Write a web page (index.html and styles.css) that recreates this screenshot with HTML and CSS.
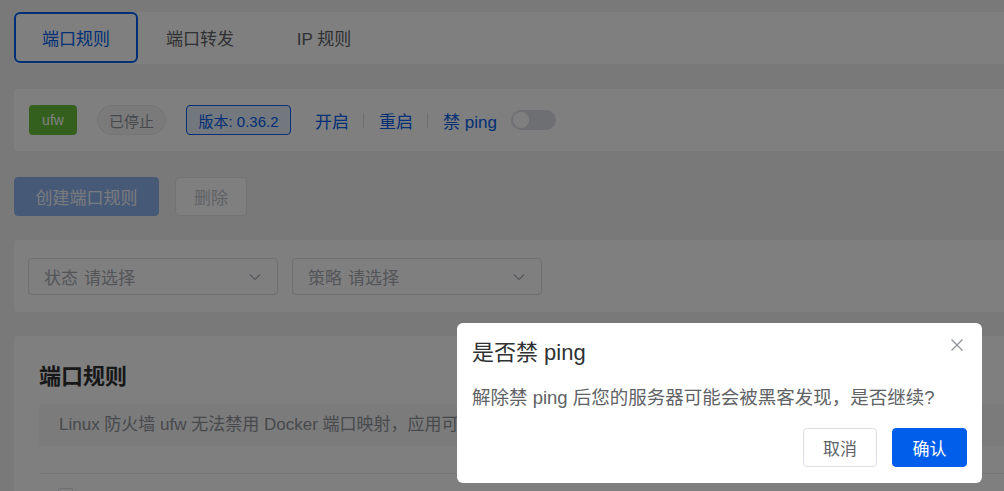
FILE: index.html
```html
<!DOCTYPE html>
<html>
    <head>
        <meta charset="utf-8">
        <link rel="stylesheet" href="styles.css">
    </head>
    <body>
        <div class="page">
            <div class="card tabs">
                <div class="tab active">端口规则</div>
                <div class="tab">端口转发</div>
                <div class="tab">IP 规则</div>
            </div>

            <div class="card status-bar">
                <span class="tag tag-green">ufw</span>
                <span class="tag tag-pill">已停止</span>
                <span class="tag tag-blue">版本: 0.36.2</span>
                <span class="link">开启</span>
                <span class="sep"></span>
                <span class="link">重启</span>
                <span class="sep"></span>
                <span class="link">禁 ping</span>
                <span class="switch"><span class="knob"></span></span>
            </div>

            <div class="toolbar">
                <button class="btn btn-primary-disabled">创建端口规则</button>
                <button class="btn btn-disabled">删除</button>
            </div>

            <div class="card filters">
                <div class="select">
                    <span class="select-label">状态</span>
                    <span class="select-placeholder">请选择</span>
                    <svg class="chevron" width="14" height="14" viewBox="0 0 14 14">
                        <path d="M2 4.5 L7 9.5 L12 4.5" fill="none" stroke="#a8abb2" stroke-width="1.2"/>
                    </svg>
                </div>
                <div class="select">
                    <span class="select-label">策略</span>
                    <span class="select-placeholder">请选择</span>
                    <svg class="chevron" width="14" height="14" viewBox="0 0 14 14">
                        <path d="M2 4.5 L7 9.5 L12 4.5" fill="none" stroke="#a8abb2" stroke-width="1.2"/>
                    </svg>
                </div>
            </div>

            <div class="card rules">
                <h2>端口规则</h2>
                <div class="alert">Linux 防火墙 ufw 无法禁用 Docker 端口映射，应用可以通过 iptables 规则进行端口访问限制。</div>
                <div class="table-head">
                    <span class="col col-check"><span class="checkbox"></span></span>
                    <span class="col col-status">状态</span>
                    <span class="col col-proto">协议</span>
                    <span class="col col-port">端口</span>
                    <span class="col col-strategy">策略</span>
                    <span class="col col-desc">来源</span>
                </div>
            </div>
        </div>

        <div class="mask">
            <div class="dialog">
                <div class="dialog-header">
                    <span class="dialog-title">是否禁 ping</span>
                    <svg class="close" width="14" height="14" viewBox="0 0 14 14">
                        <path d="M1.5 1.5 L12.5 12.5 M12.5 1.5 L1.5 12.5" stroke="#909399" stroke-width="1.3"/>
                    </svg>
                </div>
                <div class="dialog-body">解除禁 ping 后您的服务器可能会被黑客发现，是否继续?</div>
                <div class="dialog-footer">
                    <button class="btn btn-plain">取消</button>
                    <button class="btn btn-primary">确认</button>
                </div>
            </div>
        </div>
    </body>
</html>
```

FILE: styles.css
```css
* {
    box-sizing: border-box;
}

body {
    margin: 0;
    background-color: #f2f2f3;
    font-family: "Liberation Sans", "Noto Sans CJK SC", sans-serif;
    color: #303133;
    overflow: hidden;
}

.page {
    padding: 12px 0 0 14px;
    width: 1100px;
}

.card {
    background-color: white;
    border-radius: 4px;
}

/* tabs */
.tabs {
    display: flex;
    height: 52px;
}

.tab {
    width: 124px;
    height: 51px;
    display: flex;
    align-items: center;
    justify-content: center;
    font-size: 17px;
    color: #606266;
}

.tab.active {
    border: 2px solid #005eeb;
    border-radius: 6px;
    color: #005eeb;
}

/* status */
.status-bar {
    margin-top: 25px;
    height: 62px;
    display: flex;
    align-items: center;
    padding-left: 15px;
}

.tag {
    height: 30px;
    display: inline-flex;
    align-items: center;
    justify-content: center;
    border-radius: 4px;
    font-size: 15px;
}

.tag-green {
    width: 48px;
    background-color: #67c23a;
    color: white;
    font-size: 14px;
}

.tag-pill {
    width: 69px;
    margin-left: 20px;
    border: 1px solid #e9e9eb;
    background-color: #f4f4f5;
    color: #909399;
    border-radius: 15px;
}

.tag-blue {
    width: 105px;
    margin-left: 20px;
    border: 1px solid #005eeb;
    background-color: #e6effd;
    color: #005eeb;
}

.link {
    color: #005eeb;
    font-size: 17px;
}

.tag-blue + .link {
    margin-left: 24px;
}

.sep {
    width: 1px;
    height: 15px;
    background-color: #dcdfe6;
    margin: 0 15px 0 14px;
}

.switch {
    margin-left: 14px;
    width: 45px;
    height: 20px;
    border-radius: 10px;
    background-color: #dcdfe6;
    position: relative;
}

.knob {
    position: absolute;
    top: 2px;
    left: 2px;
    width: 16px;
    height: 16px;
    border-radius: 50%;
    background-color: white;
}

/* toolbar */
.toolbar {
    margin-top: 26px;
    display: flex;
    gap: 16px;
}

.btn {
    height: 39px;
    padding: 0;
    border-radius: 4px;
    font-family: inherit;
    font-size: 17px;
    border: 1px solid transparent;
    white-space: nowrap;
}

.btn-primary-disabled {
    width: 145px;
    background-color: #8cb3ee;
    border-color: #8cb3ee;
    color: #f4f7fc;
}

.btn-disabled {
    width: 72px;
    background-color: white;
    border-color: #e4e7ed;
    color: #c0c4cc;
}

/* filters */
.filters {
    margin-top: 24px;
    height: 72px;
    padding: 18px 14px;
    display: flex;
    gap: 14px;
}

.select {
    width: 250px;
    height: 37px;
    border: 1px solid #dcdfe6;
    border-radius: 4px;
    display: flex;
    align-items: center;
    padding: 0 15px;
    font-size: 17px;
    color: #a8abb2;
}

.select-placeholder {
    margin-left: 6px;
    flex: 1;
}

/* rules */
.rules {
    margin-top: 24px;
    padding: 26px 25px 0;
    height: 200px;
}

.rules h2 {
    margin: 0;
    font-size: 22px;
    line-height: 30px;
    font-weight: bold;
}

.alert {
    margin-top: 12px;
    height: 42px;
    line-height: 42px;
    padding: 0 20px;
    background-color: #f6f6f7;
    border-radius: 4px;
    color: #909399;
    font-size: 17px;
    white-space: nowrap;
    overflow: hidden;
}

.table-head {
    margin-top: 27px;
    border-top: 1px solid #ebeef5;
    display: flex;
    padding-top: 14px;
    font-size: 17px;
    font-weight: bold;
    color: #909399;
}

.col {
    display: inline-block;
}

.col-check {
    width: 76px;
    padding-left: 19px;
}

.checkbox {
    display: inline-block;
    width: 15px;
    height: 15px;
    border: 1px solid #dcdfe6;
    border-radius: 2px;
}

.col-status { width: 160px; }
.col-proto { width: 160px; }
.col-port { width: 263px; }
.col-strategy { width: 180px; }

/* dialog */
.mask {
    position: fixed;
    top: 0;
    left: 0;
    width: 100vw;
    height: 100vh;
    background-color: rgba(0, 0, 0, 0.5);
}

.dialog {
    position: absolute;
    left: 457px;
    top: 323px;
    width: 525px;
    height: 160px;
    background-color: white;
    border-radius: 6px;
    padding: 15px 15px 16px;
    display: flex;
    flex-direction: column;
}

.dialog-header {
    display: flex;
    justify-content: space-between;
    align-items: flex-start;
}

.dialog-title {
    font-size: 22px;
    line-height: 30px;
    color: #303133;
}

.close {
    margin-top: 0px;
    margin-right: 3px;
}

.dialog-body {
    margin-top: 15px;
    font-size: 18.5px;
    line-height: 30px;
    color: #606266;
}

.dialog-footer {
    margin-top: auto;
    display: flex;
    justify-content: flex-end;
    gap: 15px;
}

.btn-plain {
    width: 74px;
    background-color: white;
    border-color: #dcdfe6;
    color: #606266;
}

.btn-primary {
    width: 75px;
    background-color: #005eeb;
    border-color: #005eeb;
    color: white;
}
```
